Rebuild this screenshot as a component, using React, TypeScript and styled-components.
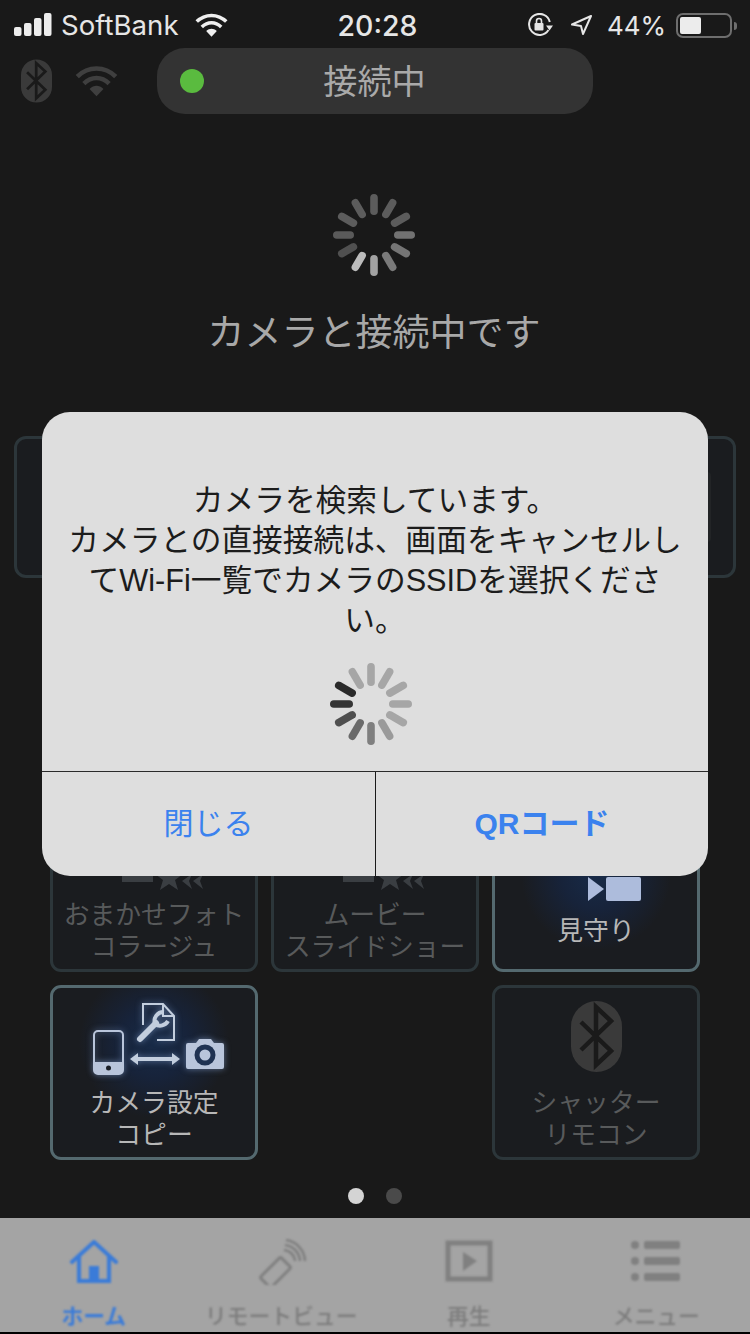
import React from "react";
import styled, { createGlobalStyle } from "styled-components";

const Global = createGlobalStyle`
  html, body { margin: 0; padding: 0; background: #191919; }
  * { box-sizing: border-box; }
  body { font-family: "Noto Sans CJK JP", "Noto Sans", sans-serif; }
`;

const Page = styled.div`
  position: relative;
  width: 750px;
  height: 1334px;
  overflow: hidden;
  background: #191919;
  display: flex;
  flex-direction: column;
  align-items: center;
`;

const StatusBar = styled.div`
  width: 100%;
  height: 48px;
  display: grid;
  grid-template-columns: 1fr auto 1fr;
  align-items: center;
  padding: 2px 12px 0 14px;
  color: #e6e6e6;
  font-family: Inter, "Liberation Sans", Arial, sans-serif;
`;
const StatusLeft = styled.div`
  display: flex;
  align-items: center;
  font-size: 27.6px;
  font-weight: 400;
`;
const Carrier = styled.span`
  margin: 0 16px 0 9px;
`;
const Clock = styled.div`
  font-size: 28.4px;
  font-weight: 500;
  margin-left: 3px;
`;
const StatusRight = styled.div`
  display: flex;
  align-items: center;
  justify-content: flex-end;
  font-size: 26px;
`;
const RotationLock = styled.svg`
  margin-right: 17px;
`;
const LocationArrow = styled.svg`
  margin-right: 15px;
`;
const Battery = styled.span`
  position: relative;
  width: 56px;
  height: 25px;
  margin-left: 10px;
  margin-right: 6px;
  border: 2px solid #6e6e6e;
  border-radius: 7px;
  padding: 2px;
  display: flex;
  &::after {
    content: "";
    position: absolute;
    right: -7px;
    top: 7px;
    width: 3px;
    height: 8px;
    border-radius: 0 3px 3px 0;
    background: #6e6e6e;
  }
`;
const BatteryFill = styled.span`
  display: block;
  height: 100%;
  background: #ececec;
  border-radius: 2px;
`;

const HeaderRow = styled.div`
  width: 100%;
  height: 66px;
  display: flex;
  align-items: center;
  padding-left: 21px;
`;
const HeaderGap = styled.span`
  width: 23px;
`;
const ConnectionBar = styled.div`
  width: 436px;
  height: 66px;
  margin-left: 39px;
  border-radius: 28px;
  background: #333333;
  display: grid;
  grid-template-columns: 1fr auto 1fr;
  align-items: center;
  padding: 0 23px;
`;
const GreenDot = styled.span`
  width: 24px;
  height: 24px;
  border-radius: 50%;
  background: #5abb3f;
`;
const ConnectionText = styled.span`
  font-size: 34.2px;
  line-height: 44px;
  color: #a9a9a9;
  padding-bottom: 4px;
  margin-right: 1px;
`;

const TopSpinner = styled.div`
  margin-top: 79px;
  margin-right: 2px;
  height: 82px;
  line-height: 0;
`;
const ConnectingText = styled.div`
  margin-top: 33px;
  margin-right: 2px;
  font-size: 37px;
  line-height: 44px;
  color: #a8a8a8;
`;
const WideCard = styled.div`
  width: 722px;
  height: 142px;
  margin-top: 84px;
  border: 3px solid #2c363a;
  border-radius: 12px;
  background: #1a1c1f;
  display: flex;
  justify-content: flex-end;
  align-items: center;
  padding-right: 22px;
`;
const CardThumb = styled.div`
  width: 30px;
  height: 70px;
  border-radius: 4px;
  background: #222426;
`;

const TileGrid = styled.div`
  display: grid;
  grid-template-columns: repeat(3, 208px);
  grid-auto-rows: 175px;
  gap: 13px;
  margin-top: 219px;
`;
const Tile = styled.div<{ $lit?: boolean; $glowY?: number }>`
  border: 3px solid ${(p) => (p.$lit ? "#54696f" : "#2c363a")};
  border-radius: 11px;
  background: ${(p) =>
    p.$lit
      ? `radial-gradient(circle 100px at 50% ${p.$glowY}px, #182b48 0%, #17233a 35%, #1a1c20 75%)`
      : "#1a1c1f"};
  display: flex;
  flex-direction: column;
  align-items: center;
  justify-content: center;
`;
const TileIcon = styled.svg`
  display: block;
  flex: none;
  width: 132px;
  height: 80px;
  margin-bottom: 9px;
  overflow: visible;
`;
const GlowIcon = styled(TileIcon)`
  filter: drop-shadow(0 0 3px rgba(150, 180, 230, 0.55));
`;
const TileLabel = styled.div<{ $lit?: boolean }>`
  font-size: 25.8px;
  line-height: 32px;
  text-align: center;
  white-space: nowrap;
  color: ${(p) => (p.$lit ? "#b7b7b7" : "#585a5b")};
`;
const EmptyCell = styled.div``;

const Pager = styled.div`
  display: flex;
  gap: 22px;
  margin-top: 28px;
`;
const PagerDot = styled.span<{ $on?: boolean }>`
  width: 16px;
  height: 16px;
  border-radius: 50%;
  background: ${(p) => (p.$on ? "#d4d4d4" : "#4a4a4a")};
`;

const TabBar = styled.div`
  width: 100%;
  height: 116px;
  margin-top: 14px;
  background: #a4a4a4;
  border-bottom: 2px solid #000;
  display: grid;
  grid-template-columns: repeat(4, 1fr);
`;
const Tab = styled.div<{ $on?: boolean }>`
  display: flex;
  flex-direction: column;
  align-items: center;
  padding-top: 21px;
  color: ${(p) => (p.$on ? "#3a7bd8" : "#7c7c7c")};
  filter: blur(0.9px);
`;
const TabIcon = styled.svg`
  display: block;
  width: 52px;
  height: 46px;
`;
const TabLabel = styled.div<{ $on?: boolean }>`
  margin-top: 16px;
  font-size: 21.8px;
  line-height: 28px;
  font-weight: ${(p) => (p.$on ? 700 : 500)};
  white-space: nowrap;
`;

const Dialog = styled.div`
  position: absolute;
  left: 42px;
  top: 412px;
  width: 666px;
  height: 464px;
  border-radius: 28px;
  background: #dedede;
  display: flex;
  flex-direction: column;
  overflow: hidden;
  font-family: "Liberation Sans", "Noto Sans CJK JP", sans-serif;
`;
const DialogBody = styled.div`
  flex: 1;
  display: flex;
  flex-direction: column;
  align-items: center;
  padding-top: 69px;
`;
const DialogText = styled.div`
  width: 624px;
  font-size: 30.7px;
  line-height: 40px;
  height: 160px;
  text-align: center;
  color: #1c1c1c;
`;
const DialogSpinner = styled.div`
  margin-top: 21px;
  margin-right: 8px;
  line-height: 0;
`;
const DialogActions = styled.div`
  height: 105px;
  display: grid;
  grid-template-columns: 1fr 1fr;
  border-top: 1.5px solid #2a2a2a;
`;
const DialogButton = styled.div<{ $strong?: boolean }>`
  display: flex;
  align-items: center;
  justify-content: center;
  font-size: 30px;
  font-weight: ${(p) => (p.$strong ? 700 : 400)};
  color: #3b82ee;
  padding-bottom: 6px;
  & + & {
    border-left: 1.5px solid #1a1a1a;
  }
`;

const Spinner: React.FC<{ inner: number; colors: string[] }> = ({ inner, colors }) => (
  <svg width={84} height={84} viewBox="-42 -42 84 84">
    {colors.map((c, i) => (
      <rect
        key={i}
        x={-3.8}
        y={-41}
        width={7.6}
        height={41 - inner}
        rx={3.8}
        fill={c}
        transform={`rotate(${i * 30})`}
      />
    ))}
  </svg>
);

const Wifi: React.FC<{ w: number; h: number; color: string }> = ({ w, h, color }) => (
  <svg width={w} height={h} viewBox="0 0 34 24" fill="none">
    <path d="M1.8 8.5C10.5 0 23.5 0 32.2 8.5" stroke={color} strokeWidth="3.6" />
    <path d="M7 14C13 8.2 21 8.2 27 14" stroke={color} strokeWidth="3.6" />
    <path d="M11.5 18.3C15 15 19 15 22.5 18.3L17 24Z" fill={color} />
  </svg>
);

const BluetoothBadge: React.FC<{ w: number; h: number }> = ({ w, h }) => (
  <svg width={w} height={h} viewBox="0 0 51 71" fill="none">
    <rect x="0" y="0" width="51" height="71" rx="25.5" fill="#3a3a3a" />
    <path d="M10 21L40 50L25 64V6L40 20L10 49" stroke="#1a1a1a" strokeWidth="4.5" />
  </svg>
);

const CollageIcon = () => (
  <TileIcon viewBox="0 0 132 80" fill="#3a3e42">
    <rect x="34" y="66" width="31" height="8" />
    <path d="M81 54L85 66H95L87 72L90 82L81 76L72 82L75 72L67 66H77Z" />
    <path d="M104 66L94 73L104 81L101 73Z M115 66L105 73L115 81L112 73Z" />
  </TileIcon>
);

const WatchIcon = () => (
  <TileIcon viewBox="0 0 132 80" fill="#adbcdc">
    <path d="M58 53L74 65L58 77Z" />
    <rect x="76" y="53" width="35" height="24" rx="2" />
  </TileIcon>
);

const CopyIcon = () => (
  <GlowIcon viewBox="-5 0 132 80" fill="none">
    <rect x="1" y="35" width="29" height="43" rx="4" stroke="#b9c5db" strokeWidth="2" />
    <path d="M1 66H30V74a4 4 0 0 1-4 4H5a4 4 0 0 1-4-4Z" fill="#b9c5db" />
    <circle cx="15.5" cy="72" r="2.5" fill="#1a1e26" />
    <path d="M50 29V8H70L81 20V44H64" stroke="#c3cede" strokeWidth="2" />
    <path d="M70 8V20H81" stroke="#c3cede" strokeWidth="2" />
    <path d="M47 43L63 27" stroke="#c3cede" strokeWidth="6" strokeLinecap="round" />
    <path d="M71 16a9 9 0 0 0-9 12a9 9 0 0 0 13-3" stroke="#c3cede" strokeWidth="4" />
    <path d="M42 61H82V65H42Z" fill="#c3cede" />
    <path d="M37 63L45 57V69Z M87 63L79 57V69Z" fill="#c3cede" />
    <path
      d="M93 49a2 2 0 0 1 2-2H103L106 43H118L121 47H129a2 2 0 0 1 2 2V71a2 2 0 0 1-2 2H95a2 2 0 0 1-2-2Z"
      fill="#b9c5db"
    />
    <circle cx="112" cy="59" r="10.5" fill="#1f3252" />
    <circle cx="112" cy="59" r="5.5" fill="#b9c5db" />
  </GlowIcon>
);

const BluetoothSlot = styled.div`
  display: flex;
  justify-content: center;
  padding-top: 5px;
  line-height: 0;
`;
const BluetoothIcon = () => (
  <TileIcon as="div">
    <BluetoothSlot>
      <BluetoothBadge w={51} h={71} />
    </BluetoothSlot>
  </TileIcon>
);

const gray = "#808080";

const topColors = [
  "#5c5c5c", "#5c5c5c", "#5c5c5c", "#727272", "#757575", "#7a7a7a",
  "#a2a2a2", "#bcbcbc", "#505050", "#5a5a5a", "#5c5c5c", "#5c5c5c",
];
const dialogColors = [
  "#a6a6a6", "#a6a6a6", "#a6a6a6", "#a6a6a6", "#a6a6a6", "#9a9a9a",
  "#7f7f7f", "#6a6a6a", "#4f4f4f", "#353535", "#2a2a2a", "#a6a6a6",
];

export default function App() {
  return (
    <>
      <Global />
      <Page>
        <StatusBar>
          <StatusLeft>
            <svg width="38" height="24" viewBox="0 0 38 24" fill="#ededed">
              <rect x="0" y="14" width="7.5" height="9" rx="2" />
              <rect x="10" y="10" width="7.5" height="13" rx="2" />
              <rect x="20" y="5" width="7.5" height="18" rx="2" />
              <rect x="30" y="0" width="7.5" height="23" rx="2" />
            </svg>
            <Carrier>SoftBank</Carrier>
            <Wifi w={33} h={24} color="#efefef" />
          </StatusLeft>
          <Clock>20:28</Clock>
          <StatusRight>
            <RotationLock width="27" height="24" viewBox="0 0 27 24" fill="none">
              <path d="M21.5 17A10.5 10.5 0 1 1 22.8 9" stroke="#e6e6e6" strokeWidth="2" />
              <path d="M19 17.5H26L22.5 12.5Z" fill="#e6e6e6" transform="rotate(180 22.5 15)" />
              <rect x="7.5" y="10" width="9" height="7.5" rx="1" fill="#e6e6e6" />
              <path d="M9.5 10V8a2.5 2.5 0 0 1 5 0V10" stroke="#e6e6e6" strokeWidth="1.6" />
            </RotationLock>
            <LocationArrow width="21" height="20" viewBox="0 0 21 20" fill="none">
              <path d="M20 1L1 9.5L10 11L12 19Z" stroke="#e6e6e6" strokeWidth="2" strokeLinejoin="round" />
            </LocationArrow>
            <span>44%</span>
            <Battery>
              <BatteryFill style={{ width: 44 * 0.48 }} />
            </Battery>
          </StatusRight>
        </StatusBar>

        <HeaderRow>
          <BluetoothBadge w={31} h={44} />
          <HeaderGap />
          <Wifi w={43} h={32} color="#3f3f3f" />
          <ConnectionBar>
            <GreenDot />
            <ConnectionText>接続中</ConnectionText>
          </ConnectionBar>
        </HeaderRow>

        <TopSpinner>
          <Spinner inner={20} colors={topColors} />
        </TopSpinner>
        <ConnectingText>カメラと接続中です</ConnectingText>

        <WideCard>
          <CardThumb />
        </WideCard>

        <TileGrid>
          <Tile>
            <CollageIcon />
            <TileLabel>
              おまかせフォト
              <br />
              コラージュ
            </TileLabel>
          </Tile>
          <Tile>
            <CollageIcon />
            <TileLabel>
              ムービー
              <br />
              スライドショー
            </TileLabel>
          </Tile>
          <Tile $lit $glowY={75}>
            <WatchIcon />
            <TileLabel $lit>見守り</TileLabel>
          </Tile>
          <Tile $lit $glowY={55}>
            <CopyIcon />
            <TileLabel $lit>
              カメラ設定
              <br />
              コピー
            </TileLabel>
          </Tile>
          <EmptyCell />
          <Tile>
            <BluetoothIcon />
            <TileLabel>
              シャッター
              <br />
              リモコン
            </TileLabel>
          </Tile>
        </TileGrid>

        <Pager>
          <PagerDot $on />
          <PagerDot />
        </Pager>

        <TabBar>
          <Tab $on>
            <TabIcon viewBox="0 0 52 46" fill="none">
              <path d="M4 23L26 3L48 23" stroke="currentColor" strokeWidth="4" strokeLinecap="round" strokeLinejoin="round" />
              <path d="M11 17V42H41V17" stroke="currentColor" strokeWidth="4" />
              <rect x="21" y="27" width="10" height="15" fill="currentColor" />
            </TabIcon>
            <TabLabel $on>ホーム</TabLabel>
          </Tab>
          <Tab>
            <TabIcon viewBox="0 0 52 46" fill="none">
              <rect x="6" y="26" width="29" height="15" rx="2" stroke={gray} strokeWidth="3" transform="rotate(-45 20.5 33.5)" />
              <path d="M29 11A12 12 0 0 1 40 22" stroke={gray} strokeWidth="2.6" />
              <path d="M30 6A17 17 0 0 1 45 22" stroke={gray} strokeWidth="2.6" />
              <path d="M31 1A22 22 0 0 1 50 22" stroke={gray} strokeWidth="2.6" />
            </TabIcon>
            <TabLabel>リモートビュー</TabLabel>
          </Tab>
          <Tab>
            <TabIcon viewBox="0 0 52 46" fill="none">
              <rect x="5" y="4" width="42" height="36" stroke={gray} strokeWidth="5" />
              <path d="M20 13L34 22L20 32Z" fill={gray} />
            </TabIcon>
            <TabLabel>再生</TabLabel>
          </Tab>
          <Tab>
            <TabIcon viewBox="0 0 52 46" fill={gray}>
              <circle cx="5" cy="6" r="4" />
              <rect x="14" y="2" width="36" height="8" rx="2" />
              <circle cx="5" cy="22" r="4" />
              <rect x="14" y="18" width="36" height="8" rx="2" />
              <circle cx="5" cy="38" r="4" />
              <rect x="14" y="34" width="36" height="8" rx="2" />
            </TabIcon>
            <TabLabel>メニュー</TabLabel>
          </Tab>
        </TabBar>

        <Dialog>
          <DialogBody>
            <DialogText>
              カメラを検索しています。
              <br />
              カメラとの直接接続は、画面をキャンセルしてWi-Fi一覧でカメラのSSIDを選択ください。
            </DialogText>
            <DialogSpinner>
              <Spinner inner={18} colors={dialogColors} />
            </DialogSpinner>
          </DialogBody>
          <DialogActions>
            <DialogButton>閉じる</DialogButton>
            <DialogButton $strong>QRコード</DialogButton>
          </DialogActions>
        </Dialog>
      </Page>
    </>
  );
}
